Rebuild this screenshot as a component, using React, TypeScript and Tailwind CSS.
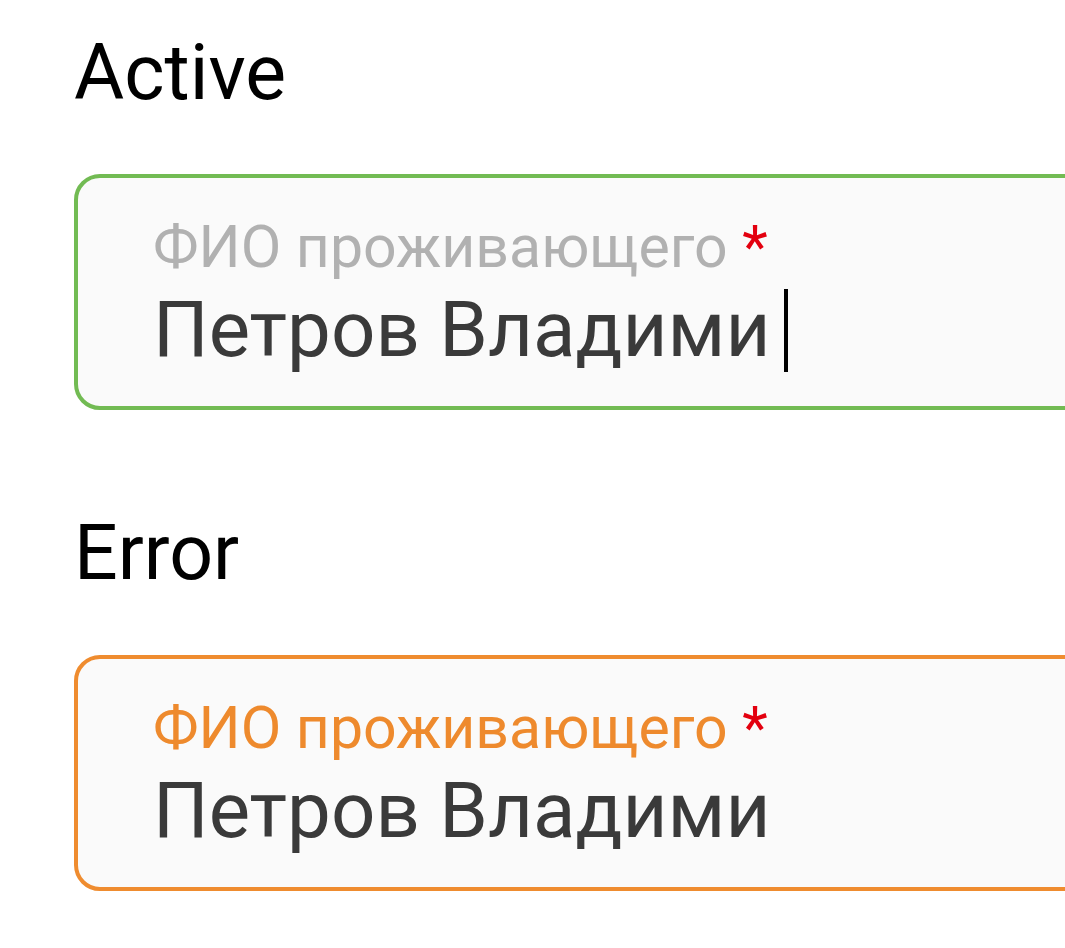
import React from 'react';

type FieldProps = {
    label: string;
    value: string;
    state: 'active' | 'error';
};

function Field({ label, value, state }: FieldProps) {
    const isError = state === 'error';
    return (
        <div
            className={
                isError
                    ? 'w-[1100px] h-[236px] rounded-[26px] border-[4px] border-[#ef8c2f] bg-[#fafafa] pl-[75px] pt-[34px]'
                    : 'w-[1100px] h-[236px] rounded-[26px] border-[4px] border-[#72bb53] bg-[#fafafa] pl-[75px] pt-[34px]'
            }
        >
            <div
                className={
                    isError
                        ? 'text-[59px] leading-[69px] text-[#ee8a2d]'
                        : 'text-[59px] leading-[69px] text-[#b1b1b1]'
                }
            >
                {label} <span className="text-[#e3000f]">*</span>
            </div>
            <div className="flex items-center text-[78px] leading-[98px] text-[#3a3a3a]">
                <span>{value}</span>
                {!isError && <span className="ml-[14px] inline-block w-[4px] h-[83px] bg-black" />}
            </div>
        </div>
    );
}

export default function App() {
    return (
        <div className="w-[1065px] h-[948px] overflow-hidden bg-white pl-[74px] font-['Roboto',sans-serif]">
            <h2 className="pt-[27px] text-[77px] leading-[92px] text-black">Active</h2>
            <div className="mt-[55px]">
                <Field label="ФИО проживающего" value="Петров Владими" state="active" />
            </div>
            <h2 className="mt-[97px] text-[77px] leading-[92px] text-black">Error</h2>
            <div className="mt-[56px]">
                <Field label="ФИО проживающего" value="Петров Владими" state="error" />
            </div>
        </div>
    );
}
